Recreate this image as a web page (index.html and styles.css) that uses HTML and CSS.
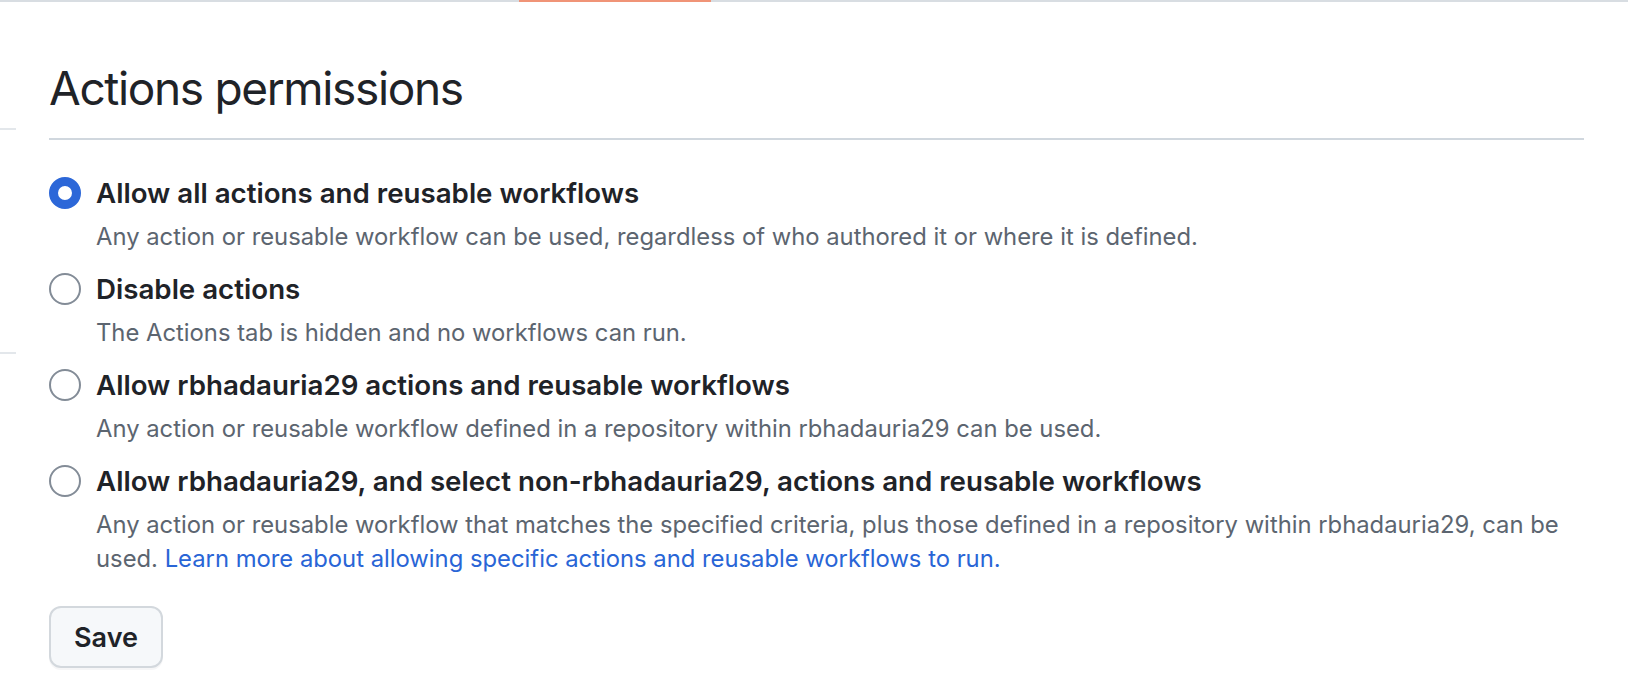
FILE: index.html
```html
<!DOCTYPE html>
<html lang="en">
<head>
<meta charset="utf-8">
<title>Actions permissions</title>
<link rel="stylesheet" href="styles.css">
</head>
<body>
<div class="tabline">
  <div class="tab-spacer"></div>
  <div class="tab-selected"></div>
</div>
<div class="layout">
  <aside class="sidebar">
    <div class="side-rule side-rule-1"></div>
    <div class="side-rule side-rule-2"></div>
  </aside>
  <main class="content">
    <div class="subhead">
      <h2 class="subhead-heading">Actions permissions</h2>
    </div>
    <form class="options">
      <label class="option">
        <span class="radio checked"></span>
        <span class="option-text">
          <span class="option-title">Allow all actions and reusable workflows</span>
          <span class="note">Any action or reusable workflow can be used, regardless of who authored it or where it is defined.</span>
        </span>
      </label>
      <label class="option">
        <span class="radio"></span>
        <span class="option-text">
          <span class="option-title">Disable actions</span>
          <span class="note">The Actions tab is hidden and no workflows can run.</span>
        </span>
      </label>
      <label class="option">
        <span class="radio"></span>
        <span class="option-text">
          <span class="option-title">Allow rbhadauria29 actions and reusable workflows</span>
          <span class="note">Any action or reusable workflow defined in a repository within rbhadauria29 can be used.</span>
        </span>
      </label>
      <label class="option">
        <span class="radio"></span>
        <span class="option-text">
          <span class="option-title">Allow rbhadauria29, and select non-rbhadauria29, actions and reusable workflows</span>
          <span class="note">Any action or reusable workflow that matches the specified criteria, plus those defined in a repository within rbhadauria29, can be used. <a class="link" href="#">Learn more about allowing specific actions and reusable workflows to run.</a></span>
        </span>
      </label>
      <div class="actions">
        <button type="button" class="btn">Save</button>
      </div>
    </form>
  </main>
</div>
</body>
</html>
```
FILE: styles.css
```css
* { box-sizing: border-box; }
html, body { margin: 0; padding: 0; background: #ffffff; }
body {
  font-family: Inter, "Noto Sans", "Liberation Sans", sans-serif;
  color: #1f2328;
  width: 1628px;
  height: 688px;
  overflow: hidden;
}
.tabline {
  display: flex;
  height: 2px;
  background: #d8dde2;
}
.tab-spacer { width: 519px; }
.tab-selected { width: 192px; background: #f09477; }

.layout {
  display: grid;
  grid-template-columns: 16px 1535px;
  column-gap: 33px;
}
.sidebar { display: flex; flex-direction: column; }
.side-rule { height: 2px; background: #e3e7eb; }
.side-rule-1 { margin-top: 126px; }
.side-rule-2 { margin-top: 222px; }

.subhead {
  margin-top: 56px;
  padding-bottom: 20px;
  border-bottom: 2px solid #d0d7de;
}
.subhead-heading {
  margin: 0;
  font-size: 46px;
  font-weight: 400;
  line-height: 60px;
  letter-spacing: -1.35px;
  color: #1f2328;
}

.options {
  display: flex;
  flex-direction: column;
  padding-top: 33px;
}
.option {
  display: flex;
  align-items: flex-start;
  gap: 15px;
  margin-bottom: 15px;
  cursor: pointer;
}
.radio {
  flex: none;
  width: 32px;
  height: 32px;
  margin-top: 4px;
  border-radius: 50%;
  border: 2px solid #838c97;
  background: #ffffff;
}
.radio.checked {
  border: 9px solid #2c67d8;
}
.option-text {
  display: flex;
  flex-direction: column;
  gap: 7px;
}
.option-title {
  font-size: 27.7px;
  font-weight: 600;
  line-height: 40px;
  color: #1f2328;
}
.note {
  display: block;
  font-size: 23.8px;
  line-height: 34px;
  color: #5c6570;
}
.link {
  color: #2965d6;
  text-decoration: none;
}
.actions {
  padding-top: 15px;
}
.btn {
  width: 114px;
  height: 62px;
  padding: 0;
  font-family: inherit;
  font-size: 27px;
  font-weight: 600;
  color: #1f2328;
  background: #f6f8fa;
  border: 2px solid #d3d8dd;
  border-radius: 12px;
  box-shadow: 0 2px 0 rgba(31, 35, 40, 0.04);
}
```
